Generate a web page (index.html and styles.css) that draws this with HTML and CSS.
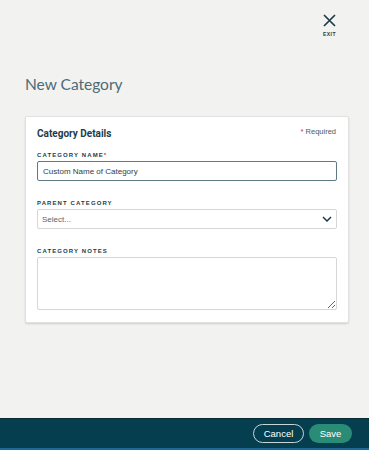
FILE: index.html
```html
<!DOCTYPE html>
<html lang="en">
<head>
    <meta charset="UTF-8">
    <meta name="viewport" content="width=device-width, initial-scale=1.0">
    <title>New Category</title>
    <link rel="stylesheet" href="styles.css">
</head>
<body>
    <div class="page">
        <div class="topbar">
            <a class="exit" href="#">
                <svg width="13" height="13" viewBox="0 0 13 13">
                    <path d="M1 1 L12 12 M12 1 L1 12" stroke="#1d3c48" stroke-width="1.7" fill="none"/>
                </svg>
                <span class="exit-text">EXIT</span>
            </a>
        </div>
        <h1 class="page-title">New Category</h1>
        <div class="card">
            <div class="card-head">
                <div class="card-title">Category Details</div>
                <div class="required"><span class="star">*</span> Required</div>
            </div>
            <div class="field">
                <label class="field-label">CATEGORY NAME<span class="star">*</span></label>
                <input type="text" class="text-input active" value="Custom Name of Category">
            </div>
            <div class="field">
                <label class="field-label">PARENT CATEGORY</label>
                <div class="select">
                    <span>Select...</span>
                    <svg width="10" height="6" viewBox="0 0 10 6">
                        <path d="M1 1 L5 5 L9 1" stroke="#1d3c48" stroke-width="1.5" fill="none"/>
                    </svg>
                </div>
            </div>
            <div class="field">
                <label class="field-label">CATEGORY NOTES</label>
                <textarea class="notes"></textarea>
            </div>
        </div>
    </div>
    <div class="footer">
        <button class="btn btn-cancel">Cancel</button>
        <button class="btn btn-save">Save</button>
    </div>
</body>
</html>
```

FILE: styles.css
```css
* {
    box-sizing: border-box;
}
html, body {
    height: 100%;
}
body {
    margin: 0;
    background: #f2f2f1;
    font-family: 'Liberation Sans', Arial, sans-serif;
    color: #1d3c48;
    display: flex;
    flex-direction: column;
}
.page {
    flex: 1;
}
.topbar {
    display: flex;
    justify-content: flex-end;
    padding: 14px 33px 0 0;
}
.exit {
    display: flex;
    flex-direction: column;
    align-items: center;
    text-decoration: none;
}
.exit-text {
    font-size: 5px;
    font-weight: bold;
    letter-spacing: 0.5px;
    color: #1d3c48;
    margin-top: 4px;
}
.page-title {
    font-family: Lato, Arial, sans-serif;
    font-weight: 400;
    font-size: 15.5px;
    color: #4d6b76;
    margin: 38px 0 23px 25px;
}
.card {
    background: #ffffff;
    margin: 0 20px 0 25px;
    padding: 10px 11px 12px 11px;
    border: 1px solid #e2e2e2;
    border-radius: 2px;
    box-shadow: 0 1px 2px rgba(0, 0, 0, 0.15);
}
.card-head {
    display: flex;
    justify-content: space-between;
    align-items: flex-start;
    height: 13px;
    margin-bottom: 11px;
}
.card-title {
    font-family: Roboto, Arial, sans-serif;
    font-size: 10px;
    line-height: 13px;
    font-weight: bold;
    color: #1d3c48;
}
.required {
    font-size: 7.5px;
    line-height: 9px;
    color: #4d5a60;
    padding-right: 1px;
}
.star {
    color: #d0343a;
}
.field {
    margin-bottom: 18px;
}
.field:last-child {
    margin-bottom: 0;
}
.field-label {
    display: block;
    font-size: 6px;
    line-height: 8px;
    font-weight: 900;
    letter-spacing: 1.1px;
    color: #1d3c48;
    margin-bottom: 2px;
}
.text-input {
    display: block;
    width: 100%;
    height: 20px;
    padding: 0 5px;
    font-family: 'Liberation Sans', Arial, sans-serif;
    font-size: 8px;
    color: #333d42;
    border: 1px solid #d6d6d6;
    border-radius: 2px;
    outline: none;
}
.text-input.active {
    border: 1.5px solid #5f7a84;
}
.select {
    display: flex;
    justify-content: space-between;
    align-items: center;
    height: 20px;
    padding: 0 4px;
    font-size: 8px;
    color: #5c6568;
    border: 1px solid #d6d6d6;
    border-radius: 2px;
}
.notes {
    display: block;
    width: 100%;
    height: 53px;
    border: 1px solid #d6d6d6;
    border-radius: 2px;
    resize: vertical;
}
.footer {
    height: 32px;
    background: #053f4f;
    border-top: 1px solid #0a2a33;
    border-bottom: 2px solid #1b6b98;
    display: flex;
    justify-content: flex-end;
    align-items: center;
    gap: 5px;
    padding-right: 17px;
}
.btn {
    font-family: 'Liberation Sans', Arial, sans-serif;
    font-size: 9.5px;
    height: 19px;
    border-radius: 10px;
    cursor: pointer;
    color: #ffffff;
}
.btn-cancel {
    width: 51px;
    background: transparent;
    border: 1px solid #c8d4d8;
}
.btn-save {
    width: 43px;
    background: #2a8c74;
    border: none;
}
```
